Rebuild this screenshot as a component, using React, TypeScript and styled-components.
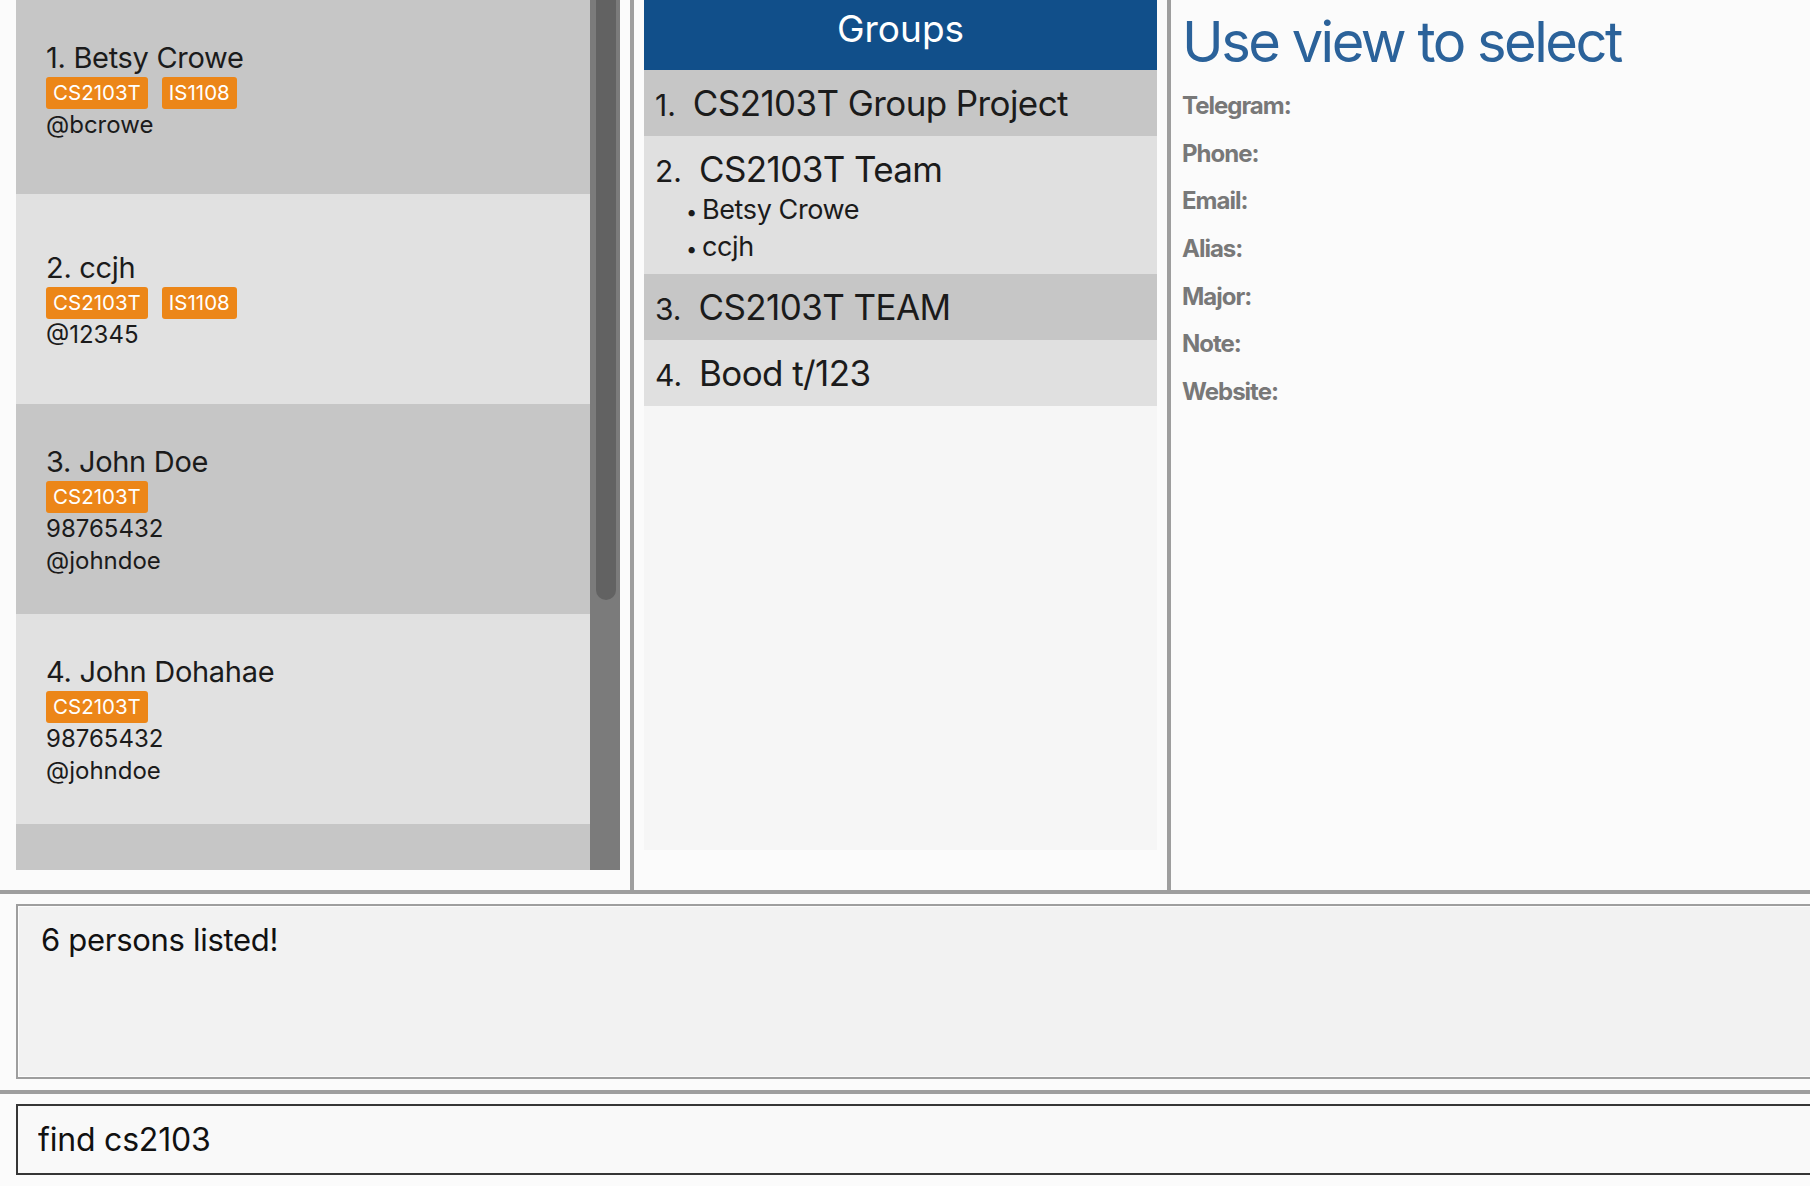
import React from "react";
import styled, { createGlobalStyle } from "styled-components";

const GlobalStyle = createGlobalStyle`
  html, body { margin: 0; padding: 0; background: #fbfbfb; }
  body { font-family: Inter, "Noto Sans", sans-serif; color: #1c1c1c; }
  * { box-sizing: border-box; }
`;

const Window = styled.div`
  width: 1810px;
  height: 1186px;
  overflow: hidden;
  display: flex;
  flex-direction: column;
  background: #fbfbfb;
`;

const TopArea = styled.div`
  height: 890px;
  display: flex;
  flex-shrink: 0;
`;

const VDivider = styled.div`
  width: 4px;
  background: #9e9e9e;
  flex-shrink: 0;
`;

const HDivider = styled.div`
  height: 4px;
  background: #9e9e9e;
  flex-shrink: 0;
`;

/* ---------- persons ---------- */
const PersonColumn = styled.div`
  width: 630px;
  flex-shrink: 0;
  padding: 0 10px 20px 16px;
  display: flex;
`;

const ListViewport = styled.div`
  flex: 1;
  overflow: hidden;
`;

const CardStack = styled.div`
  display: flex;
  flex-direction: column;
  margin-top: -16px;
`;

const ScrollTrack = styled.div`
  width: 30px;
  background: #7b7b7b;
  padding: 0 4px 0 6px;
`;

const ScrollThumb = styled.div`
  height: 600px;
  background: #626262;
  border-radius: 0 0 10px 10px;
`;

const Card = styled.div<{ $alt: boolean }>`
  height: 210px;
  flex-shrink: 0;
  background: ${(p) => (p.$alt ? "#e1e1e1" : "#c6c6c6")};
  display: flex;
  flex-direction: column;
  justify-content: center;
  padding: 2px 0 0 30px;
  color: #1b1b1b;
`;

const CardName = styled.div`
  font-size: 29px;
  line-height: 38px;
  letter-spacing: -0.3px;
`;

const TagRow = styled.div`
  display: flex;
  gap: 14px;
  height: 32px;
`;

const Tag = styled.span`
  background: #ec8618;
  color: #ffffff;
  font-size: 20.5px;
  line-height: 32px;
  padding: 0 7px;
  border-radius: 3px;
`;

const CardLine = styled.div`
  font-size: 24px;
  line-height: 32px;
`;

/* ---------- groups ---------- */
const GroupColumn = styled.div`
  width: 533px;
  flex-shrink: 0;
  padding: 0 10px 40px 10px;
`;

const GroupPanel = styled.div`
  height: 100%;
  background: #f6f6f6;
  display: flex;
  flex-direction: column;
`;

const GroupHeader = styled.div`
  height: 70px;
  flex-shrink: 0;
  background: #114f8a;
  color: #ffffff;
  font-size: 37px;
  line-height: 57px;
  text-align: center;
`;

const GroupItem = styled.div<{ $alt: boolean }>`
  background: ${(p) => (p.$alt ? "#e0e0e0" : "#c6c6c6")};
  padding: 11px 0 11px 11px;
  color: #1b1b1b;
`;

const GroupTitleRow = styled.div`
  display: flex;
  align-items: baseline;
  gap: 17px;
  height: 44px;
  overflow: visible;
`;

const GroupIndex = styled.span`
  font-size: 30px;
  line-height: 40px;
`;

const GroupName = styled.span`
  font-size: 35px;
  line-height: 44px;
  letter-spacing: -0.6px;
`;

const MemberList = styled.div`
  margin-bottom: -2px;
`;

const Member = styled.div`
  height: 37px;
  font-size: 27px;
  line-height: 37px;
  letter-spacing: -0.4px;
  padding-left: 31px;
  &::before {
    content: "•";
    display: inline-block;
    width: 16px;
    line-height: 1;
    font-size: 20px;
  }
`;

/* ---------- details ---------- */
const DetailColumn = styled.div`
  flex: 1;
  padding: 8px 0 0 11px;
`;

const DetailTitle = styled.div`
  font-size: 56px;
  line-height: 68px;
  letter-spacing: -2.5px;
  color: #2b629a;
  margin-bottom: 6px;
`;

const DetailLabel = styled.div`
  font-size: 24px;
  line-height: 47.67px;
  font-weight: 700;
  letter-spacing: -1px;
  color: #787878;
`;

/* ---------- result / command ---------- */
const ResultArea = styled.div`
  height: 196px;
  flex-shrink: 0;
  padding: 10px 0 0 16px;
`;

const ResultBox = styled.div`
  height: 175px;
  margin-right: -30px;
  border: 2px solid #9e9e9e;
  box-shadow: inset 0 0 0 1px #fcfcfc;
  background: #f2f2f2;
  padding: 14px 0 0 23px;
  font-size: 31px;
  line-height: 40px;
  letter-spacing: -0.3px;
  color: #111111;
`;

const CommandArea = styled.div`
  height: 92px;
  flex-shrink: 0;
  padding: 10px 0 0 16px;
`;

const CommandInput = styled.input`
  display: block;
  width: calc(100% + 30px);
  height: 71px;
  border: 2px solid #363636;
  background: #f9f9f9;
  padding: 0 0 0 20px;
  font-family: Inter, "Noto Sans", sans-serif;
  font-size: 32px;
  letter-spacing: -0.2px;
  color: #111111;
  outline: none;
`;

type Person = { name: string; tags: string[]; lines: string[] };

const persons: Person[] = [
  { name: "Betsy Crowe", tags: ["CS2103T", "IS1108"], lines: ["@bcrowe"] },
  { name: "ccjh", tags: ["CS2103T", "IS1108"], lines: ["@12345"] },
  { name: "John Doe", tags: ["CS2103T"], lines: ["98765432", "@johndoe"] },
  { name: "John Dohahae", tags: ["CS2103T"], lines: ["98765432", "@johndoe"] },
  { name: "Johnathan Lim", tags: ["CS2103T"], lines: ["91234567", "@jlim"] },
  { name: "Kim Lee", tags: ["CS2103T"], lines: ["@kimlee"] },
];

type Group = { name: string; members: string[] };

const groups: Group[] = [
  { name: "CS2103T Group Project", members: [] },
  { name: "CS2103T Team", members: ["Betsy Crowe", "ccjh"] },
  { name: "CS2103T TEAM", members: [] },
  { name: "Bood t/123", members: [] },
];

const detailFields = ["Telegram:", "Phone:", "Email:", "Alias:", "Major:", "Note:", "Website:"];

export default function App() {
  return (
    <>
      <GlobalStyle />
      <Window>
        <TopArea>
          <PersonColumn>
            <ListViewport>
              <CardStack>
                {persons.map((p, i) => (
                  <Card key={i} $alt={i % 2 === 1}>
                    <CardName>
                      {i + 1}. {p.name}
                    </CardName>
                    <TagRow>
                      {p.tags.map((t) => (
                        <Tag key={t}>{t}</Tag>
                      ))}
                    </TagRow>
                    {p.lines.map((l, j) => (
                      <CardLine key={j}>{l}</CardLine>
                    ))}
                  </Card>
                ))}
              </CardStack>
            </ListViewport>
            <ScrollTrack>
              <ScrollThumb />
            </ScrollTrack>
          </PersonColumn>
          <VDivider />
          <GroupColumn>
            <GroupPanel>
              <GroupHeader>Groups</GroupHeader>
              {groups.map((g, i) => (
                <GroupItem key={i} $alt={i % 2 === 1}>
                  <GroupTitleRow>
                    <GroupIndex>{i + 1}.</GroupIndex>
                    <GroupName>{g.name}</GroupName>
                  </GroupTitleRow>
                  {g.members.length > 0 && (
                    <MemberList>
                      {g.members.map((m) => (
                        <Member key={m}>{m}</Member>
                      ))}
                    </MemberList>
                  )}
                </GroupItem>
              ))}
            </GroupPanel>
          </GroupColumn>
          <VDivider />
          <DetailColumn>
            <DetailTitle>Use view to select</DetailTitle>
            {detailFields.map((f) => (
              <DetailLabel key={f}>{f}</DetailLabel>
            ))}
          </DetailColumn>
        </TopArea>
        <HDivider />
        <ResultArea>
          <ResultBox>6 persons listed!</ResultBox>
        </ResultArea>
        <HDivider />
        <CommandArea>
          <CommandInput value="find cs2103" readOnly />
        </CommandArea>
      </Window>
    </>
  );
}
